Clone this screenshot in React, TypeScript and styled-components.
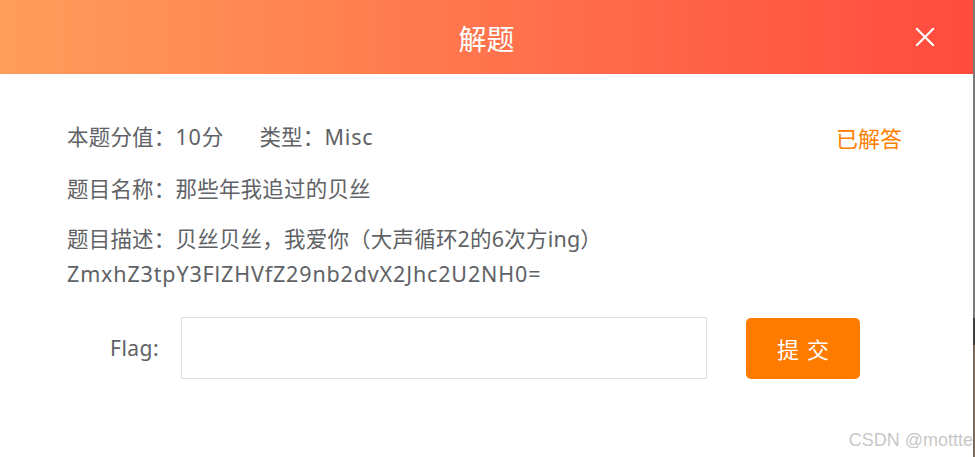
import React from "react";
import styled, { createGlobalStyle } from "styled-components";

const Global = createGlobalStyle`
  html, body { margin: 0; padding: 0; background: #fff; }
  body { font-family: "Noto Sans", "Noto Sans CJK SC", sans-serif; }
  * { box-sizing: border-box; }
`;

const Page = styled.div`
  display: flex;
  width: 975px;
  height: 457px;
  overflow: hidden;
`;

const Dialog = styled.div`
  flex: 1;
  display: flex;
  flex-direction: column;
  background: #fff;
  position: relative;
`;

const Edge = styled.div`
  width: 2px;
  background: linear-gradient(
    to bottom,
    #7a7a7a 0px,
    #7a7a7a 318px,
    #3b3d40 318px,
    #3b3d40 345px,
    #7b6a58 345px,
    #7b6a58 100%
  );
`;

const Header = styled.div`
  height: 74px;
  flex-shrink: 0;
  display: flex;
  align-items: center;
  justify-content: center;
  position: relative;
  background: linear-gradient(to right, #ff9d5b, #ff4b3e);
`;

const Title = styled.div`
  color: #fff;
  font-family: "Noto Sans CJK SC", sans-serif;
  font-size: 28px;
  line-height: 1;
  margin-top: 2px;
`;

const Close = styled.button`
  position: absolute;
  right: 38px;
  top: 27px;
  width: 20px;
  height: 20px;
  padding: 0;
  border: 0;
  background: transparent;
  display: flex;
  align-items: center;
  justify-content: center;
`;

const Body = styled.div`
  flex: 1;
  display: flex;
  flex-direction: column;
  padding: 48px 71px 0 67px;
`;

const Content = styled.div`
  display: flex;
  flex-direction: column;
`;

const TopRow = styled.div`
  display: flex;
  align-items: center;
  justify-content: space-between;
  height: 30px;
`;

const Line = styled.div<{ $mt?: number; $ls?: number }>`
  color: #606266;
  font-size: 21.5px;
  line-height: 30px;
  margin-top: ${(p) => p.$mt ?? 0}px;
  white-space: nowrap;
  letter-spacing: ${(p) => p.$ls ?? 0.2}px;
`;

const Latin = styled.span`
  letter-spacing: 0.8px;
`;

const Gap = styled.span`
  display: inline-block;
  width: 36px;
`;

const Solved = styled.span`
  color: #ff8000;
  font-family: "Noto Sans CJK SC", sans-serif;
  font-size: 22px;
  line-height: 30px;
`;

const FlagRow = styled.div`
  display: flex;
  align-items: center;
  margin-top: 28px;
  padding-left: 43px;
`;

const FlagLabel = styled.label`
  color: #606266;
  font-family: "Noto Sans", "Noto Sans CJK SC", sans-serif;
  font-size: 21px;
  letter-spacing: 0.5px;
  width: 71px;
  display: inline-block;
`;

const Input = styled.input`
  width: 526px;
  height: 62px;
  border: 1px solid #dcdfe6;
  border-radius: 2px;
  outline: none;
  font-size: 18px;
  padding: 0 12px;
`;

const Submit = styled.button`
  margin-left: 39px;
  width: 114px;
  height: 61px;
  border: 0;
  border-radius: 5px;
  background: #ff7b00;
  color: #fff;
  font-family: "Noto Sans CJK SC", sans-serif;
  font-size: 22px;
  letter-spacing: 8px;
  padding-left: 14px;
`;

const Watermark = styled.div`
  position: absolute;
  right: 0;
  bottom: 6px;
  color: #c8c8c8;
  font-family: "Liberation Sans", sans-serif;
  font-size: 18px;
`;

export default function App() {
  return (
    <>
      <Global />
      <Page>
        <Dialog>
          <Header>
            <Title>解题</Title>
            <Close aria-label="close">
              <svg width="20" height="20" viewBox="0 0 20 20">
                <path d="M2 2 L18 18 M18 2 L2 18" stroke="#fff" strokeWidth="2.2" strokeLinecap="square" />
              </svg>
            </Close>
          </Header>
          <Body>
            <Content>
              <TopRow>
                <Line>
                  本题分值：<Latin>10</Latin>分<Gap />类型：<Latin>Misc</Latin>
                </Line>
                <Solved>已解答</Solved>
              </TopRow>
              <Line $mt={22}>题目名称：那些年我追过的贝丝</Line>
              <Line $mt={20}>题目描述：贝丝贝丝，我爱你（大声循环2的6次方ing）</Line>
              <Line $mt={5} $ls={0.85}>ZmxhZ3tpY3FlZHVfZ29nb2dvX2Jhc2U2NH0=</Line>
            </Content>
            <FlagRow>
              <FlagLabel>Flag:</FlagLabel>
              <Input />
              <Submit>提交</Submit>
            </FlagRow>
          </Body>
          <Watermark>CSDN @mottte</Watermark>
        </Dialog>
        <Edge />
      </Page>
    </>
  );
}
